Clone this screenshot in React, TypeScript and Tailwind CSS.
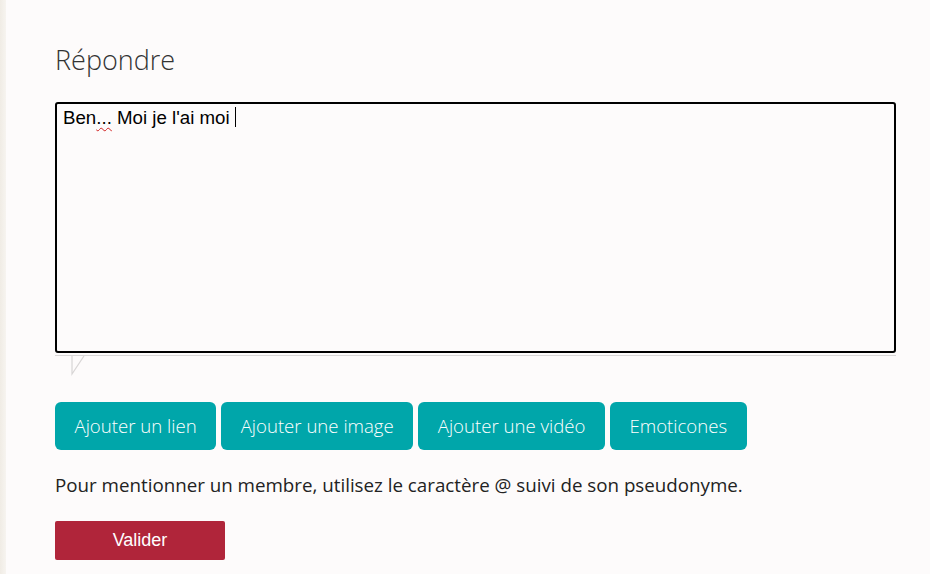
const buttons = ["Ajouter un lien", "Ajouter une image", "Ajouter une vidéo", "Emoticones"];

export default function App() {
  return (
    <div className="flex h-[574px] w-[930px] overflow-hidden bg-[#fdfbfb]">
      <div className="w-[6px] shrink-0 bg-gradient-to-r from-[#f0ece5] to-[#f7f4f0]" />
      <div className="flex-1 pl-[49px] pr-[34px]">
        <h2 className="mt-[42px] font-['Open_Sans',sans-serif] text-[27px] font-light leading-[36px] text-[#333]">
          Répondre
        </h2>

        <div className="relative mt-[24px]">
          <div className="h-[251px] w-full rounded-[3px] border-2 border-black bg-[#fdfbfb] px-[6px] pt-0 font-['Liberation_Sans',Arial,sans-serif] text-[18.7px] leading-[23px] text-black">
            Ben
            <span className="underline decoration-[#d02020] decoration-wavy decoration-1 underline-offset-[3px]">...</span>{" "}
            Moi je l'ai moi <span className="inline-block h-[20px] w-px translate-y-[3px] bg-black" />
          </div>
          {/* bubble tail under the editor */}
          <div className="h-[3px] w-full border-b border-[#d8d6d6]" />
          <svg className="absolute left-[16px] top-[254px]" width="16" height="20" viewBox="0 0 16 20">
            <path d="M1 0 L1 18 L13 0" fill="#fdfbfb" stroke="#d8d6d6" strokeWidth="1.2" />
          </svg>
        </div>

        <div className="mt-[46px] flex gap-[5px]">
          {buttons.map((label) => (
            <button
              key={label}
              type="button"
              className="h-[48px] rounded-[6px] bg-[#00a6aa] px-[19.5px] font-['Open_Sans',sans-serif] text-[18.6px] font-light text-white"
            >
              {label}
            </button>
          ))}
        </div>

        <p className="mt-[22px] font-['Open_Sans',sans-serif] text-[18.75px] leading-[26px] text-[#222]">
          Pour mentionner un membre, utilisez le caractère @ suivi de son pseudonyme.
        </p>

        <button
          type="button"
          className="mt-[23px] h-[39px] w-[170px] rounded-[2px] bg-[#b0253a] font-['Liberation_Sans',Arial,sans-serif] text-[18px] text-white"
        >
          Valider
        </button>
      </div>
    </div>
  );
}
